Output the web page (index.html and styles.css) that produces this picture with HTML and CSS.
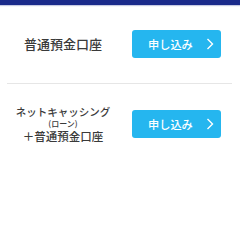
FILE: index.html
```html
<!DOCTYPE html>
<html lang="ja">
<head>
<meta charset="utf-8">
<link rel="stylesheet" href="styles.css">
</head>
<body>
<div class="topbar"></div>
<div class="row row-first">
  <div class="label"><span class="l-big">普通預金口座</span></div>
  <a class="btn" href="#"><span class="btn-text">申し込み</span><svg class="chev" viewBox="0 0 8 12" width="8" height="12"><path d="M1.5 1 L6.5 6 L1.5 11" fill="none" stroke="#fff" stroke-width="1.4"/></svg></a>
</div>
<div class="divider"></div>
<div class="row row-second">
  <div class="label">
    <span class="l-mid">ネットキャッシング</span>
    <span class="l-small">(ローン)</span>
    <span class="l-mid2">＋普通預金口座</span>
  </div>
  <a class="btn" href="#"><span class="btn-text">申し込み</span><svg class="chev" viewBox="0 0 8 12" width="8" height="12"><path d="M1.5 1 L6.5 6 L1.5 11" fill="none" stroke="#fff" stroke-width="1.4"/></svg></a>
</div>
</body>
</html>
```
FILE: styles.css
```css
html, body {
  margin: 0;
  padding: 0;
  background: #fff;
  font-family: "Noto Sans CJK JP", "Noto Sans", sans-serif;
}
.topbar {
  height: 5px;
  background: #1a2a8a;
  box-shadow: 0 1px 1px rgba(26, 42, 138, 0.25);
}
.row {
  display: flex;
  align-items: center;
  padding-right: 19px;
  gap: 6px;
}
.row-first {
  height: 78px;
}
.row-second {
  height: 80px;
}
.label {
  flex: 1;
  display: flex;
  flex-direction: column;
  align-items: center;
  color: #3a3a3a;
  text-align: center;
  font-weight: 500;
}
.l-big {
  font-size: 13px;
  line-height: 16px;
}
.l-mid {
  font-size: 10.5px;
  line-height: 13px;
}
.l-small {
  font-size: 8px;
  line-height: 11px;
}
.l-mid2 {
  font-size: 11.5px;
  line-height: 14px;
}
.divider {
  height: 1px;
  background: #e6e6e6;
  margin: 0 8px 0 7px;
}
.btn {
  width: 89px;
  height: 28px;
  border-radius: 3px;
  background: #25b6ef;
  display: flex;
  align-items: center;
  padding-left: 16px;
  box-sizing: border-box;
  text-decoration: none;
}
.btn-text {
  color: #fff;
  font-size: 11.2px;
  line-height: 14px;
  font-weight: 500;
}
.chev {
  margin-left: 13px;
}
```
